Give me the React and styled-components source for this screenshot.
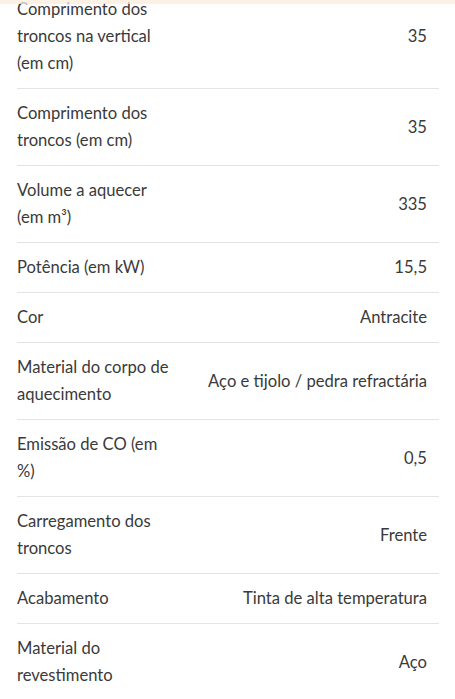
import styled, { createGlobalStyle } from "styled-components";

const GlobalStyle = createGlobalStyle`
  html, body {
    margin: 0;
    padding: 0;
    background: #ffffff;
  }
  body {
    font-family: Lato, "Open Sans", sans-serif;
    color: #3a3a3a;
  }
`;

const TopFade = styled.div`
  position: fixed;
  top: 0;
  left: 0;
  right: 0;
  height: 4px;
  background: rgba(252, 236, 222, 0.75);
  z-index: 2;
`;

const SpecList = styled.div`
  margin-top: -15px;
  padding: 0 16px 0 17px;
`;

const SpecRow = styled.div`
  display: flex;
  align-items: center;
  justify-content: space-between;
  gap: 16px;
  padding: 11px 12px 11px 0;
  border-bottom: 1px solid #e4e4e4;
  font-size: 16.6px;
  line-height: 27px;
`;

const Label = styled.div`
  flex: 0 0 156px;
`;

const Value = styled.div`
  text-align: right;
`;

const specs = [
  ["Comprimento dos troncos na vertical (em cm)", "35"],
  ["Comprimento dos troncos (em cm)", "35"],
  ["Volume a aquecer (em m³)", "335"],
  ["Potência (em kW)", "15,5"],
  ["Cor", "Antracite"],
  ["Material do corpo de aquecimento", "Aço e tijolo / pedra refractária"],
  ["Emissão de CO (em %)", "0,5"],
  ["Carregamento dos troncos", "Frente"],
  ["Acabamento", "Tinta de alta temperatura"],
  ["Material do revestimento", "Aço"],
];

export default function App() {
  return (
    <>
      <GlobalStyle />
      <TopFade />
      <SpecList>
        {specs.map(([label, value], i) => (
          <SpecRow key={i}>
            <Label>{label}</Label>
            <Value>{value}</Value>
          </SpecRow>
        ))}
      </SpecList>
    </>
  );
}
